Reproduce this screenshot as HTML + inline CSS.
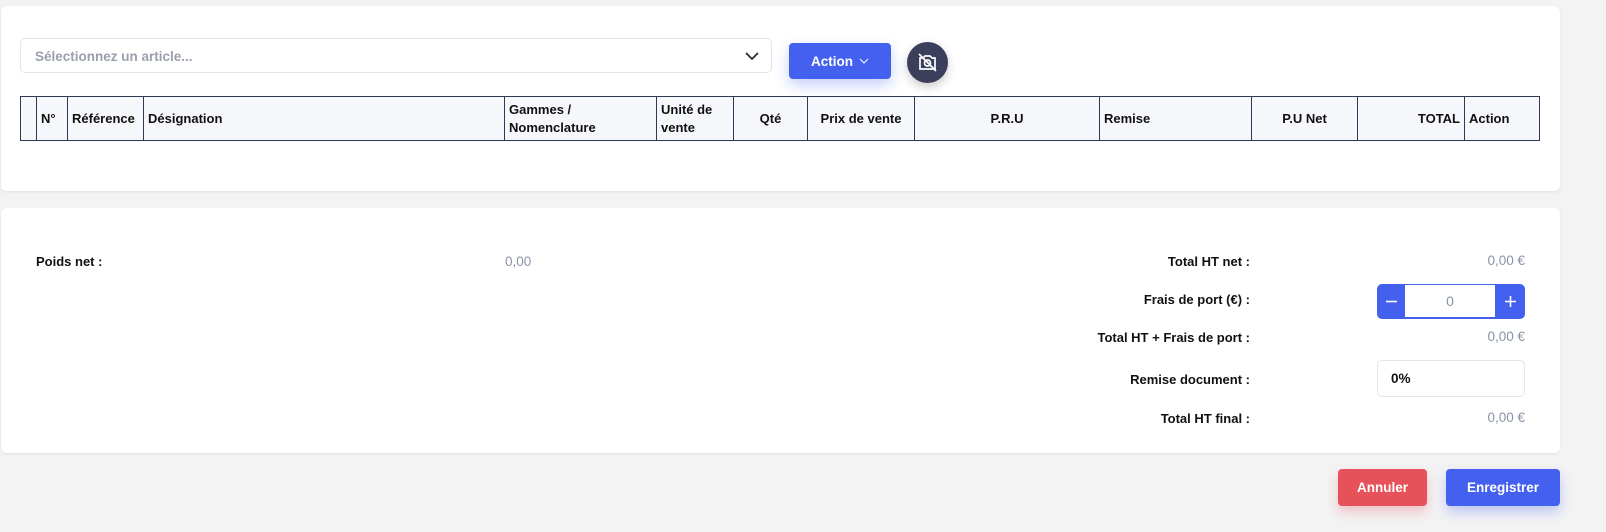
<!DOCTYPE html><html><head><style>
body{margin:0;background:#f3f3f4;font-family:"Liberation Sans",sans-serif;width:1606px;height:532px;position:relative;overflow:hidden;font-size:13px;color:#111}
.card{position:absolute;left:1px;width:1559px;background:#fff;border-radius:6px;box-shadow:0 1px 3px rgba(0,0,0,.08)}
.abs{position:absolute}
table{border-collapse:collapse;position:absolute;left:20px;top:96px;width:1520px;height:45px;background:#f5f7fa}
td{border:1px solid #2e3a55;font-weight:bold;font-size:13px;padding:0 4px;line-height:18px}
.lbl{position:absolute;font-weight:bold;font-size:13px;text-align:right;width:400px}
.val{position:absolute;color:#8a93a6;font-size:13.5px;text-align:right;width:100px}
.btn{position:absolute;color:#fff;font-weight:bold;font-size:13.5px;border-radius:4px;display:flex;align-items:center;justify-content:center}
</style></head><body>
<div class="card" style="top:6px;height:185px"></div>
<div class="card" style="top:208px;height:245px"></div>
<div class="abs" style="left:20px;top:38px;width:752px;height:35px;border:1px solid #e3e5ea;border-radius:5px;box-sizing:border-box;"><span class="abs" style="left:14px;top:10px;color:#9aa0ab;font-weight:bold;font-size:13.5px">Sélectionnez un article...</span>
<svg class="abs" style="left:724px;top:13px" width="14" height="9"><path d="M1 1L7 7L13 1" stroke="#222" stroke-width="1.6" fill="none"/></svg></div>
<div class="btn" style="left:789px;top:43px;width:102px;height:36px;background:#4361ee;box-shadow:0 6px 14px rgba(67,97,238,.3)">Action <svg style="margin-left:6px" width="10" height="6"><path d="M1 1L5 5L9 1" stroke="#fff" stroke-width="1" fill="none"/></svg></div>
<div class="abs" style="left:907px;top:42px;width:41px;height:41px;border-radius:50%;background:#3b3f5c;box-shadow:0 4px 10px rgba(0,0,0,.2)">
<svg class="abs" style="left:10px;top:10px" width="21" height="21" viewBox="0 0 21 21" fill="none" stroke="#fff" stroke-width="1.7"><path d="M3 6h3l2-2h5l2 2h3v11H3z"/><circle cx="10.5" cy="11" r="3"/><path d="M2 2L19 19"/></svg></div>
<table><tr>
<td style="width:7px"></td><td style="width:22px">N°</td><td style="width:67px">Référence</td><td style="width:352px">Désignation</td><td style="width:143px">Gammes /<br>Nomenclature</td><td style="width:68px">Unité de<br>vente</td><td style="width:65px;text-align:center">Qté</td><td style="width:98px;text-align:center">Prix de vente</td><td style="width:176px;text-align:center">P.R.U</td><td style="width:143px">Remise</td><td style="width:97px;text-align:center">P.U Net</td><td style="width:98px;text-align:right">TOTAL</td><td>Action</td></tr></table>
<div class="abs" style="left:36px;top:254px;font-weight:bold">Poids net :</div>
<div class="abs" style="left:505px;top:254px;color:#8a93a6;font-size:13.5px">0,00</div>
<div class="lbl" style="left:850px;top:254px">Total HT net :</div>
<div class="lbl" style="left:850px;top:292px">Frais de port (€) :</div>
<div class="lbl" style="left:850px;top:330px">Total HT + Frais de port :</div>
<div class="lbl" style="left:850px;top:372px">Remise document :</div>
<div class="lbl" style="left:850px;top:411px">Total HT final :</div>
<div class="val" style="left:1425px;top:253px">0,00 €</div>
<div class="val" style="left:1425px;top:329px">0,00 €</div>
<div class="val" style="left:1425px;top:410px">0,00 €</div>
<div class="abs" style="left:1377px;top:284px;width:148px;height:35px;background:#4361ee;border-radius:5px"><div class="abs" style="left:28px;top:1px;width:90px;height:32px;background:#fff;color:#8a93a6;text-align:center;line-height:32px;font-size:14px">0</div>
<svg class="abs" style="left:8px;top:11px" width="13" height="13"><path d="M1 6.5H12" stroke="#fff" stroke-width="1.6"/></svg>
<svg class="abs" style="left:127px;top:11px" width="13" height="13"><path d="M1 6.5H12M6.5 1V12" stroke="#fff" stroke-width="1.6"/></svg></div>
<div class="abs" style="left:1377px;top:360px;width:148px;height:37px;border:1px solid #e3e5ea;border-radius:5px;box-sizing:border-box;font-weight:bold;font-size:13.5px;padding:10px 0 0 13px">0%</div>
<div class="btn" style="left:1338px;top:469px;width:89px;height:37px;background:#e7515a;box-shadow:0 6px 12px rgba(231,81,90,.3)">Annuler</div>
<div class="btn" style="left:1446px;top:469px;width:114px;height:37px;background:#4361ee;box-shadow:0 6px 12px rgba(67,97,238,.3)">Enregistrer</div>
</body></html>
